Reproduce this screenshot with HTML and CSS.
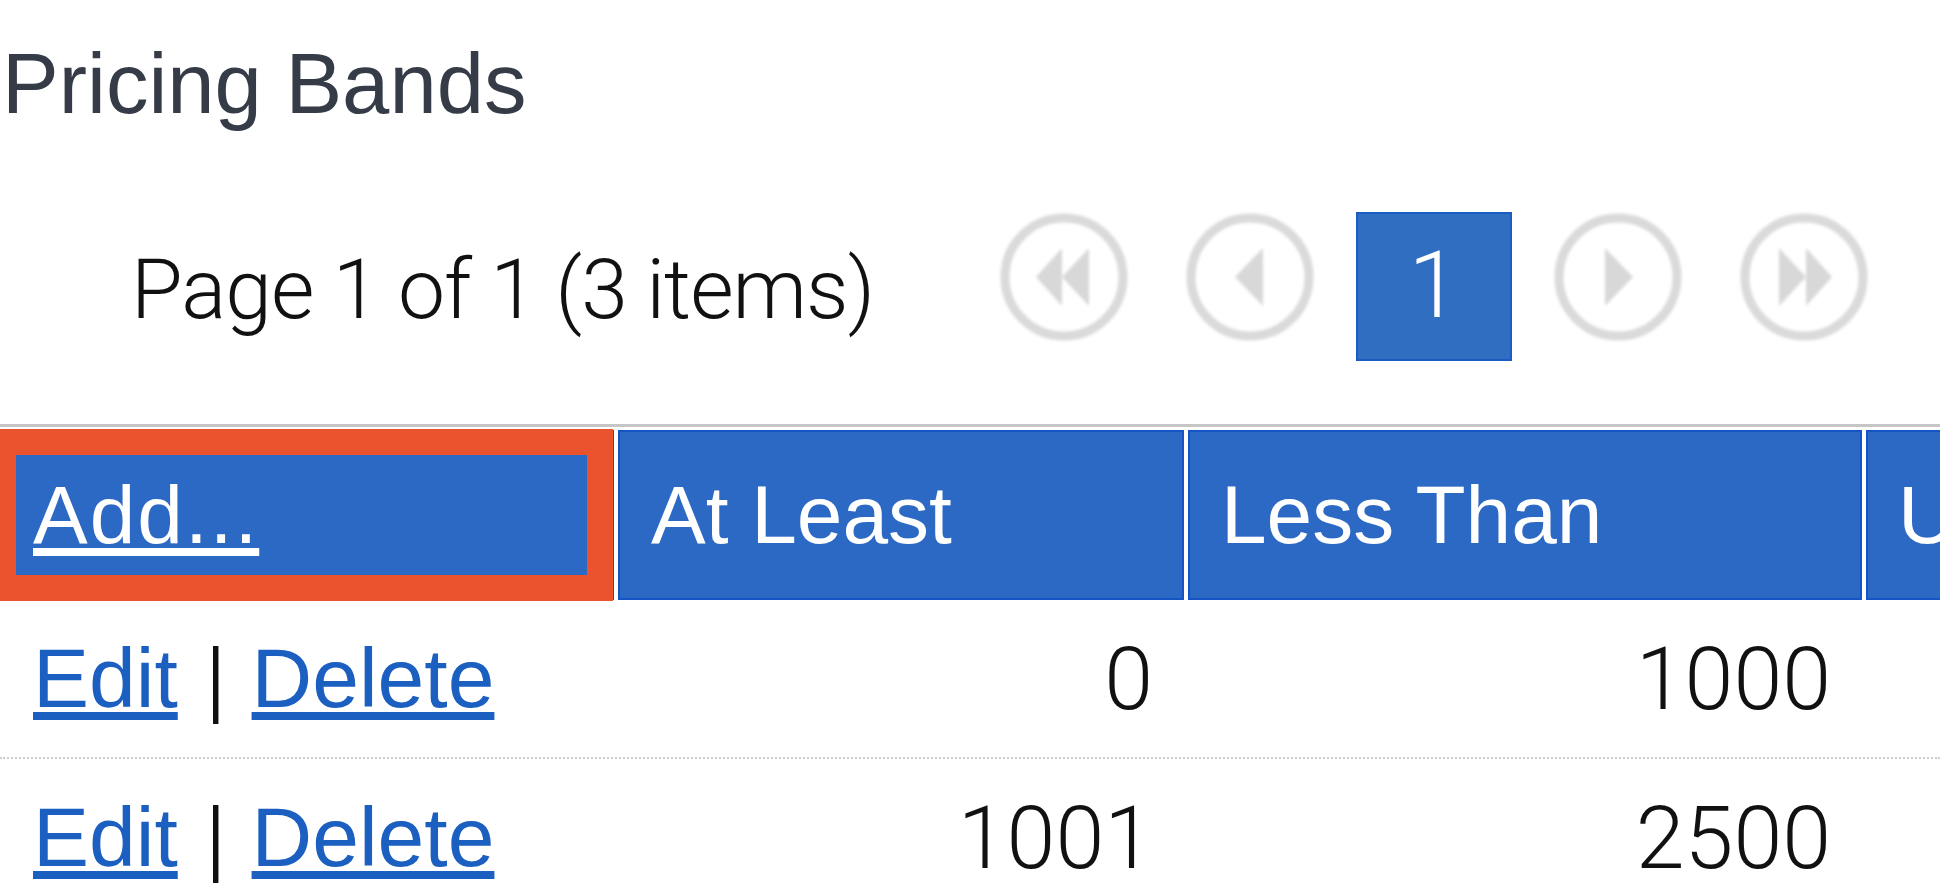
FILE: index.html
```html
<!DOCTYPE html>
<html lang="en">
<head>
<meta charset="utf-8">
<title>Pricing Bands</title>
<link rel="stylesheet" href="styles.css">
</head>
<body>
<div class="page">
  <h1 class="title">Pricing Bands</h1>

  <div class="pager">
    <div class="pager-summary">Page 1 of 1 (3 items)</div>
    <span class="pbtn circle first" aria-label="First">
      <svg viewBox="0 0 130 130" width="130" height="130">
        <circle cx="65" cy="65" r="59" fill="none" stroke="#dadada" stroke-width="9"/>
        <polygon points="37,65 63,36 63,94" fill="#d8d8d8"/>
        <polygon points="63,65 90,36 90,94" fill="#d8d8d8"/>
      </svg>
    </span>
    <span class="pbtn circle prev" aria-label="Previous">
      <svg viewBox="0 0 130 130" width="130" height="130">
        <circle cx="65" cy="65" r="59" fill="none" stroke="#dadada" stroke-width="9"/>
        <polygon points="50,65 78,36 78,94" fill="#d8d8d8"/>
      </svg>
    </span>
    <span class="pbtn current">1</span>
    <span class="pbtn circle next" aria-label="Next">
      <svg viewBox="0 0 130 130" width="130" height="130">
        <circle cx="65" cy="65" r="59" fill="none" stroke="#dadada" stroke-width="9"/>
        <polygon points="80,65 52,36 52,94" fill="#d8d8d8"/>
      </svg>
    </span>
    <span class="pbtn circle last" aria-label="Last">
      <svg viewBox="0 0 130 130" width="130" height="130">
        <circle cx="65" cy="65" r="59" fill="none" stroke="#dadada" stroke-width="9"/>
        <polygon points="67,65 40,36 40,94" fill="#d8d8d8"/>
        <polygon points="93,65 67,36 67,94" fill="#d8d8d8"/>
      </svg>
    </span>
  </div>

  <div class="grid">
    <div class="grid-head">
      <div class="hcell add-cell"><a href="#" class="add-link">Add...</a><span class="annot"></span></div>
      <div class="hcell">At Least</div>
      <div class="hcell">Less Than</div>
      <div class="hcell last-col">U</div>
    </div>
    <div class="grid-row">
      <div class="cell actions"><a href="#">Edit</a><span class="sep">|</span><a href="#">Delete</a></div>
      <div class="cell num">0</div>
      <div class="cell num">1000</div>
      <div class="cell num"></div>
    </div>
    <div class="grid-row">
      <div class="cell actions"><a href="#">Edit</a><span class="sep">|</span><a href="#">Delete</a></div>
      <div class="cell num">1001</div>
      <div class="cell num">2500</div>
      <div class="cell num"></div>
    </div>
  </div>
</div>
</body>
</html>
```

FILE: styles.css
```css
html, body {
  margin: 0;
  padding: 0;
  background: #ffffff;
  overflow: hidden;
}

.page {
  width: 1940px;
  height: 896px;
  overflow: hidden;
}

.title {
  margin: 0;
  padding: 35px 0 0 2px;
  height: 98px;
  font-family: "Liberation Sans", Arial, sans-serif;
  font-weight: normal;
  font-size: 85px;
  line-height: 98px;
  color: #353b47;
  white-space: nowrap;
}

/* pager */
.pager {
  margin-top: 79px;
  padding-left: 131px;
  height: 149px;
  display: flex;
  align-items: flex-start;
}

.pager-summary {
  width: 868px;
  flex: none;
  height: 149px;
  padding-top: 3px;
  box-sizing: border-box;
  font-family: Roboto, "Liberation Sans", sans-serif;
  font-weight: 300;
  font-size: 84px;
  line-height: 149px;
  letter-spacing: -1px;
  color: #111111;
  white-space: nowrap;
}

.pbtn {
  flex: none;
  display: block;
}

.circle {
  width: 130px;
  height: 130px;
}

.circle svg {
  display: block;
  filter: blur(1.4px);
}

.first { margin-right: 56px; }
.prev { margin-right: 41px; }
.current { margin-right: 41px; }
.next { margin-right: 56px; }

.current {
  width: 156px;
  height: 149px;
  box-sizing: border-box;
  background: #2f6ec0;
  border: 2px solid #1a5cc2;
  color: #ffffff;
  font-family: Roboto, "Liberation Sans", sans-serif;
  font-weight: 300;
  font-size: 92px;
  line-height: 143px;
  text-align: center;
}

/* grid */
.grid {
  margin-top: 63px;
  border-top: 3px solid #c6c6c6;
  padding-top: 3px;
}

.grid-head,
.grid-row {
  display: grid;
  grid-template-columns: 614px 566px 674px 1fr;
  column-gap: 4px;
}

.hcell {
  position: relative;
  height: 170px;
  box-sizing: border-box;
  padding-left: 31px;
  background: #2c69c5;
  border: 2px solid #1554c4;
  color: #ffffff;
  font-family: "Liberation Sans", Arial, sans-serif;
  font-size: 82px;
  line-height: 166px;
  white-space: nowrap;
}

.last-col {
  padding-left: 30px;
}

.add-link {
  color: #ffffff;
  text-decoration: underline;
  letter-spacing: 2px;
}

.annot {
  position: absolute;
  left: -12px;
  top: -3px;
  right: -1px;
  bottom: -3px;
  border: 26px solid #ea532d;
  pointer-events: none;
}

.grid-row {
  border-bottom: 2px dotted #cdcdcd;
}

.cell {
  height: 157px;
  font-family: "Liberation Sans", Arial, sans-serif;
  font-size: 84px;
  line-height: 157px;
  color: #111111;
  white-space: nowrap;
}

.actions {
  padding-left: 33px;
}

.actions a {
  color: #1b5fc0;
  text-decoration: underline;
}

.sep {
  display: inline-block;
  padding: 0 25px 0 27px;
  font-weight: 300;
  transform: scaleX(0.8);
}

.num {
  text-align: right;
  padding-right: 31px;
  font-family: Roboto, "Liberation Sans", sans-serif;
  font-weight: 300;
  font-size: 88px;
}
```
